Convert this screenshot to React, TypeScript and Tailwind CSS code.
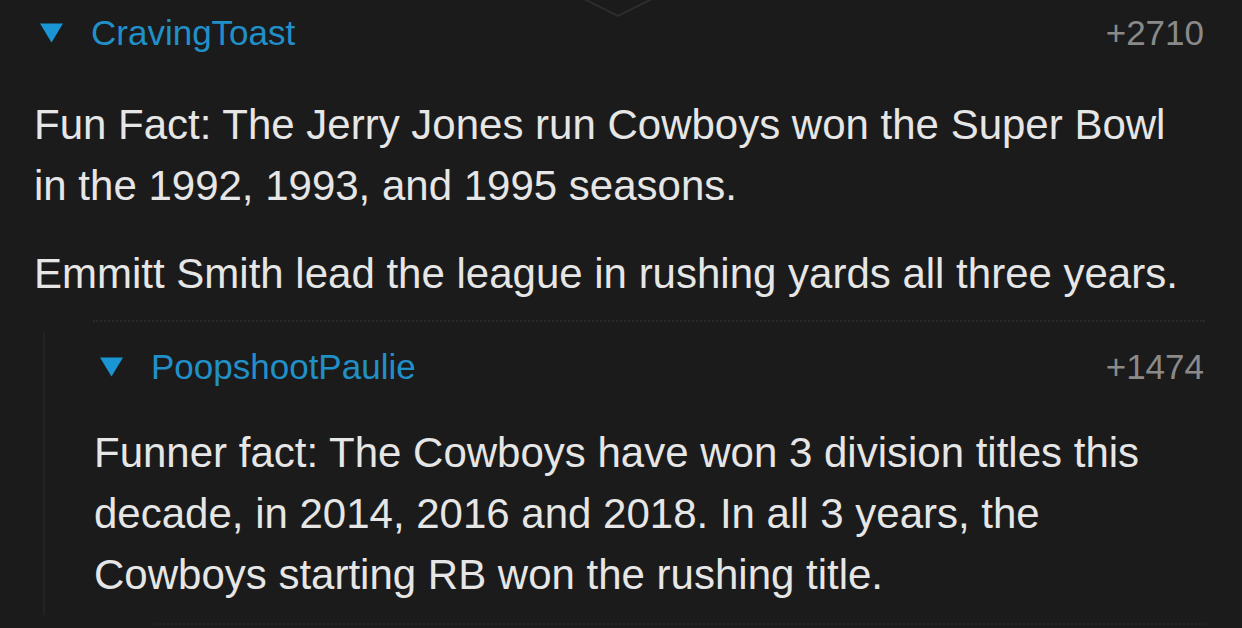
import React from 'react';

const font = { fontFamily: '"Liberation Sans", Arial, sans-serif' };

function Caret({ className }: { className?: string }) {
  return (
    <svg viewBox="0 0 24 20" className={className}>
      <path d="M0 0 H24 L12 20 Z" fill="#1a96d6" />
    </svg>
  );
}

interface HeaderProps {
  user: string;
  score: string;
}

function CommentHeader({ user, score }: HeaderProps) {
  return (
    <div className="flex items-center h-[40px] leading-[40px]">
      <Caret className="w-[23px] h-[20px] shrink-0" />
      <span className="ml-[28px] text-[35px] text-[#2190c8]">{user}</span>
      <span className="ml-auto text-[35px] text-[#8a8a8a]">{score}</span>
    </div>
  );
}

export default function App() {
  return (
    <div
      className="relative w-[1242px] h-[628px] overflow-hidden bg-[#1b1b1b] text-[#e6e6e6]"
      style={font}
    >
      {/* pull-down chevron at the top edge */}
      <svg className="absolute left-[580px] top-0 w-[76px] h-[20px]" viewBox="0 0 76 20">
        <path d="M2 -2 L38 16 L74 -2" stroke="#2d2d2d" strokeWidth="2" fill="none" />
      </svg>

      <div className="pl-[40px] pr-[38px] pt-[13px]">
        <CommentHeader user="CravingToast" score="+2710" />
      </div>

      <div className="pl-[34px] pr-[60px] mt-[41px] text-[42px] leading-[61px]">
        <p>Fun Fact: The Jerry Jones run Cowboys won the Super Bowl in the 1992, 1993, and 1995 seasons.</p>
        <p className="mt-[27px]">Emmitt Smith lead the league in rushing yards all three years.</p>
      </div>

      <div className="ml-[93px] mr-[37px] mt-[16px] border-t-2 border-dotted border-[#2a2a2a]" />

      <div className="ml-[43px] mt-[11px] h-[282px] border-l-2 border-[#232323]">
        <div className="pl-[55px] pr-[38px] pt-[14px]">
          <CommentHeader user="PoopshootPaulie" score="+1474" />
        </div>
        <div className="pl-[49px] pr-[60px] mt-[35px] text-[42px] leading-[61px]">
          <p>Funner fact: The Cowboys have won 3 division titles this decade, in 2014, 2016 and 2018. In all 3 years, the Cowboys starting RB won the rushing title.</p>
        </div>
      </div>

      <div className="ml-[155px] mr-[37px] mt-[8px] border-t-2 border-dotted border-[#262626]" />
    </div>
  );
}
